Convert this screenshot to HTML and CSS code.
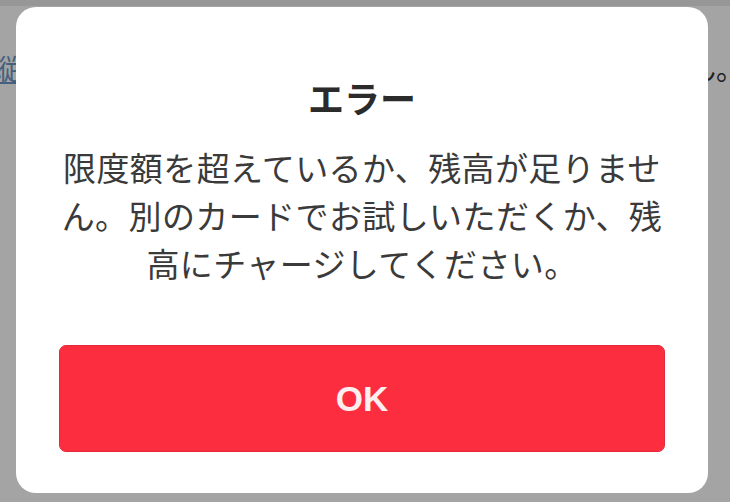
FILE: index.html
```html
<!DOCTYPE html>
<html lang="ja">
<head>
<meta charset="utf-8">
<title>エラー</title>
<link rel="stylesheet" href="styles.css">
</head>
<body>
<div class="page">
  <div class="topbar"></div>
  <p class="behind"><a class="behind-link" href="#">縦</a><span class="behind-rest">ん。</span></p>
</div>
<div class="overlay">
  <div class="dialog" role="alertdialog">
    <h2 class="dialog-title">エラー</h2>
    <p class="dialog-body">限度額を超えているか、残高が足りません。別のカードでお試しいただくか、残高にチャージしてください。</p>
    <button class="dialog-ok" type="button">OK</button>
  </div>
</div>
</body>
</html>
```

FILE: styles.css
```css
html, body {
  margin: 0;
  padding: 0;
  width: 730px;
  height: 502px;
  overflow: hidden;
}
body {
  background: #a4a4a4;
  font-family: "Noto Sans CJK JP", "Noto Sans", sans-serif;
  position: relative;
}
.page {
  display: flex;
  flex-direction: column;
}
.topbar {
  height: 6px;
  background: #979797;
}
.behind {
  margin: 42px 0 0 0;
  display: flex;
  justify-content: space-between;
  font-size: 28px;
  line-height: 40px;
  padding: 0;
}
.behind-link {
  color: #44607e;
  text-decoration: underline;
  margin-left: -10px;
}
.behind-rest {
  color: #222;
  margin-right: -14px;
}
.overlay {
  position: absolute;
  left: 16px;
  top: 7px;
}
.dialog {
  width: 606px;
  height: 380px;
  padding: 65px 43px 41px;
  background: #fff;
  border-radius: 20px;
  display: flex;
  flex-direction: column;
  align-items: stretch;
}
.dialog-title {
  margin: 0;
  text-align: center;
  font-size: 36px;
  line-height: 50px;
  font-weight: 700;
  color: #2b2b2b;
}
.dialog-body {
  margin: 21px 0 0;
  text-align: center;
  font-size: 33px;
  line-height: 48px;
  letter-spacing: 0.4px;
  color: #3a3a3a;
  font-weight: 400;
}
.dialog-ok {
  margin-top: auto;
  height: 107px;
  border: 1px solid #e42a3a;
  border-radius: 7px;
  background: #fd2d40;
  color: #fdeef0;
  font-family: "Liberation Sans", Arial, sans-serif;
  font-weight: 700;
  font-size: 35px;
  padding: 0;
}
```
